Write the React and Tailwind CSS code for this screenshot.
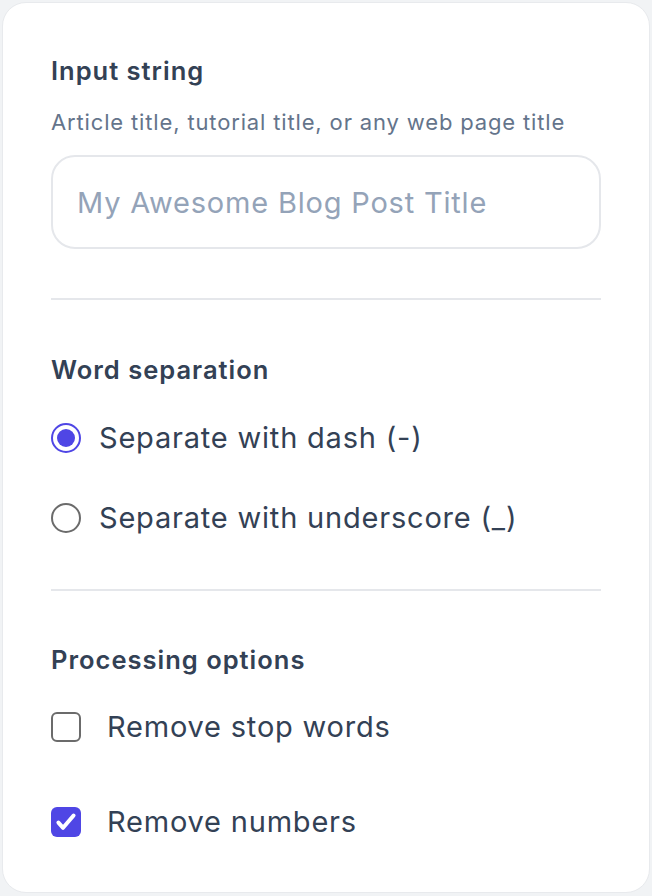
import { useState } from 'react'

function Radio({ checked, label, onClick }) {
  return (
    <button type="button" onClick={onClick} className="flex items-center h-10 text-left">
      <span
        className={`w-[30px] h-[30px] rounded-full flex items-center justify-center flex-shrink-0 border-2 ${
          checked ? 'border-[#4f46e5]' : 'border-[#6b6b6b]'
        } bg-white`}
      >
        {checked && <span className="w-[18px] h-[18px] rounded-full bg-[#4f46e5]" />}
      </span>
      <span className="ml-[18px] text-[29px] tracking-[0.8px] leading-10 text-[#334155]">{label}</span>
    </button>
  )
}

function Checkbox({ checked, label, onClick }) {
  return (
    <button type="button" onClick={onClick} className="flex items-center h-10 text-left">
      <span
        className={`w-[30px] h-[30px] rounded-[6px] flex items-center justify-center flex-shrink-0 ${
          checked ? 'bg-[#4f46e5]' : 'bg-white border-2 border-[#6b6b6b]'
        }`}
      >
        {checked && (
          <svg viewBox="0 0 24 24" className="w-[28px] h-[28px]" fill="none" stroke="white" strokeWidth="3.4" strokeLinecap="round" strokeLinejoin="round">
            <path d="M5.5 12.5l4 4.5L18.5 6.5" />
          </svg>
        )}
      </span>
      <span className="ml-[26px] text-[29px] tracking-[0.8px] leading-10 text-[#334155]">{label}</span>
    </button>
  )
}

export default function App() {
  const [sep, setSep] = useState('dash')
  const [stopWords, setStopWords] = useState(false)
  const [numbers, setNumbers] = useState(true)

  return (
    <div className="min-h-screen bg-[#f1f3f5] p-[2px] font-['Inter','Noto_Sans',sans-serif]">
      <div className="bg-white border border-[#e8eaed] rounded-[24px] px-[48px] pt-[52px] pb-[50px] h-[891px]">
        <h2 className="text-[25.5px] tracking-[1px] leading-8 font-semibold text-[#334155]">Input string</h2>
        <p className="mt-[21px] text-[22px] tracking-[0.85px] leading-7 text-[#64748b]">
          Article title, tutorial title, or any web page title
        </p>
        <input
          type="text"
          placeholder="My Awesome Blog Post Title"
          className="mt-[19px] w-full h-[94px] rounded-[24px] border-2 border-[#e5e7eb] px-[24px] text-[29px] tracking-[0.8px] text-[#334155] placeholder:text-[#94a3b8] outline-none"
        />

        <div className="mt-[49px] h-[2px] bg-[#e5e7eb]" />

        <h2 className="mt-[54px] text-[25.5px] tracking-[1px] leading-8 font-semibold text-[#334155]">Word separation</h2>
        <div className="mt-[32px] flex flex-col gap-10">
          <Radio checked={sep === 'dash'} label="Separate with dash (-)" onClick={() => setSep('dash')} />
          <Radio checked={sep === 'underscore'} label="Separate with underscore (_)" onClick={() => setSep('underscore')} />
        </div>

        <div className="mt-[51px] h-[2px] bg-[#e5e7eb]" />

        <h2 className="mt-[53px] text-[25.5px] tracking-[1px] leading-8 font-semibold text-[#334155]">Processing options</h2>
        <div className="mt-[31px] flex flex-col gap-[55px]">
          <Checkbox checked={stopWords} label="Remove stop words" onClick={() => setStopWords(!stopWords)} />
          <Checkbox checked={numbers} label="Remove numbers" onClick={() => setNumbers(!numbers)} />
        </div>
      </div>
    </div>
  )
}
